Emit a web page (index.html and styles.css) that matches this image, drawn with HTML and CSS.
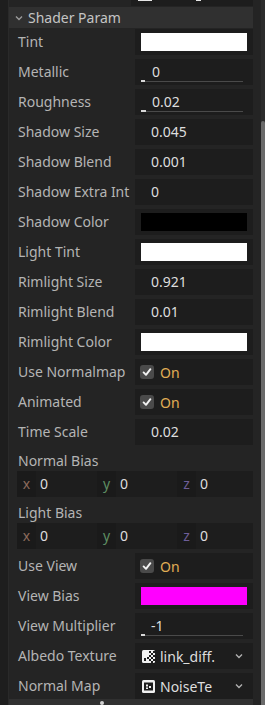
FILE: index.html
```html
<!DOCTYPE html>
<html>
<head>
<meta charset="utf-8">
<link rel="stylesheet" href="styles.css">
</head>
<body>
<div class="frame">
  <div class="strip"></div>
  <div class="panel">
    <div class="prev"><span class="mark m1"></span><span class="mark m2"></span></div>
    <div class="section-head">
      <svg class="chev" width="8" height="6" viewBox="0 0 8 6"><path d="M1 1.5 L4 4.5 L7 1.5" stroke="#9a9a9a" stroke-width="1.4" fill="none"/></svg>
      <span>Shader Param</span>
    </div>
    <div class="rows">
      <div class="row"><div class="label">Tint</div><div class="val"><div class="swatch white"></div></div></div>
      <div class="row"><div class="label">Metallic</div><div class="val slider"><span class="num">0</span><div class="track"><div class="grab"></div></div></div></div>
      <div class="row"><div class="label">Roughness</div><div class="val slider"><span class="num">0.02</span><div class="track"><div class="grab g2"></div></div></div></div>
      <div class="row"><div class="label">Shadow Size</div><div class="val plain"><span class="num">0.045</span></div></div>
      <div class="row"><div class="label">Shadow Blend</div><div class="val plain"><span class="num">0.001</span></div></div>
      <div class="row"><div class="label">Shadow Extra Int</div><div class="val plain"><span class="num">0</span></div></div>
      <div class="row"><div class="label">Shadow Color</div><div class="val"><div class="swatch black"></div></div></div>
      <div class="row"><div class="label">Light Tint</div><div class="val"><div class="swatch white"></div></div></div>
      <div class="row"><div class="label">Rimlight Size</div><div class="val plain"><span class="num">0.921</span></div></div>
      <div class="row"><div class="label">Rimlight Blend</div><div class="val plain"><span class="num">0.01</span></div></div>
      <div class="row"><div class="label">Rimlight Color</div><div class="val"><div class="swatch white"></div></div></div>
      <div class="row"><div class="label">Use Normalmap</div><div class="val check">
        <svg width="14" height="14" viewBox="0 0 14 14"><rect width="14" height="14" rx="3" fill="#4a4a4a"/><path d="M3.6 7.4 L6 9.8 L10.4 4.2" stroke="#f2f2f2" stroke-width="1.9" fill="none" stroke-linecap="round" stroke-linejoin="round"/></svg>
        <span class="on">On</span></div></div>
      <div class="row"><div class="label">Animated</div><div class="val check">
        <svg width="14" height="14" viewBox="0 0 14 14"><rect width="14" height="14" rx="3" fill="#4a4a4a"/><path d="M3.6 7.4 L6 9.8 L10.4 4.2" stroke="#f2f2f2" stroke-width="1.9" fill="none" stroke-linecap="round" stroke-linejoin="round"/></svg>
        <span class="on">On</span></div></div>
      <div class="row"><div class="label">Time Scale</div><div class="val plain"><span class="num">0.02</span></div></div>
      <div class="vlabel">Normal Bias</div>
      <div class="vec">
        <div class="comp c1"><span class="axis ax">x</span><span class="num">0</span></div>
        <div class="comp c2"><span class="axis ay">y</span><span class="num">0</span></div>
        <div class="comp c3"><span class="axis az">z</span><span class="num">0</span></div>
      </div>
      <div class="vlabel">Light Bias</div>
      <div class="vec">
        <div class="comp c1"><span class="axis ax">x</span><span class="num">0</span></div>
        <div class="comp c2"><span class="axis ay">y</span><span class="num">0</span></div>
        <div class="comp c3"><span class="axis az">z</span><span class="num">0</span></div>
      </div>
      <div class="row"><div class="label">Use View</div><div class="val check">
        <svg width="14" height="14" viewBox="0 0 14 14"><rect width="14" height="14" rx="3" fill="#4a4a4a"/><path d="M3.6 7.4 L6 9.8 L10.4 4.2" stroke="#f2f2f2" stroke-width="1.9" fill="none" stroke-linecap="round" stroke-linejoin="round"/></svg>
        <span class="on">On</span></div></div>
      <div class="row"><div class="label">View Bias</div><div class="val"><div class="swatch magenta"></div></div></div>
      <div class="row"><div class="label">View Multiplier</div><div class="val slider"><span class="num neg">-1</span><div class="track"><div class="grab"></div></div></div></div>
      <div class="row"><div class="label">Albedo Texture</div><div class="val res">
        <svg class="ricon" width="13" height="13" viewBox="0 0 13 13">
          <rect x="0" y="0" width="13" height="13" rx="1.5" fill="#f0f0f0"/>
          <rect x="7" y="1" width="2" height="2" fill="#1d1d1d"/><rect x="11" y="1" width="2" height="2" fill="#1d1d1d"/>
          <rect x="9" y="3" width="2" height="2" fill="#1d1d1d"/>
          <rect x="7" y="5" width="2" height="2" fill="#1d1d1d"/><rect x="11" y="5" width="2" height="2" fill="#1d1d1d"/>
          <rect x="5" y="7" width="2" height="2" fill="#1d1d1d"/><rect x="9" y="7" width="2" height="2" fill="#1d1d1d"/>
          <rect x="7" y="9" width="2" height="2" fill="#1d1d1d"/><rect x="11" y="9" width="2" height="2" fill="#1d1d1d"/>
          <rect x="9" y="11" width="2" height="2" fill="#1d1d1d"/>
          <rect x="2" y="8" width="2" height="3" fill="#1d1d1d"/>
        </svg>
        <span class="rname">link_diff.</span>
        <svg class="dd" width="8" height="6" viewBox="0 0 8 6"><path d="M1 1.5 L4 4.5 L7 1.5" stroke="#b0b0b0" stroke-width="1.4" fill="none"/></svg>
      </div></div>
      <div class="row last"><div class="label">Normal Map</div><div class="val res">
        <svg class="ricon" width="13" height="13" viewBox="0 0 13 13">
          <rect x="0" y="0" width="13" height="13" rx="1.5" fill="#f0f0f0"/>
          <rect x="2" y="2.5" width="9" height="8" fill="#1d1d1d"/>
          <rect x="4" y="4.5" width="2" height="2" fill="#f0f0f0"/>
          <rect x="7" y="6" width="2" height="2" fill="#f0f0f0"/>
          <rect x="4" y="7.5" width="2" height="1.5" fill="#f0f0f0"/>
        </svg>
        <span class="rname">NoiseTe</span>
        <svg class="dd" width="8" height="6" viewBox="0 0 8 6"><path d="M1 1.5 L4 4.5 L7 1.5" stroke="#b0b0b0" stroke-width="1.4" fill="none"/></svg>
      </div></div>
    </div>
    <div class="next-head"><span class="dot"></span></div>
  </div>
  <div class="gutter"></div>
  <div class="scroll"><div class="thumb"></div></div>
</div>
</body>
</html>
```
FILE: styles.css
```css
html, body {
  margin: 0;
  padding: 0;
  background: #1e1e1e;
  overflow: hidden;
}
body {
  width: 265px;
  height: 705px;
  font-family: "Noto Sans", "DejaVu Sans", sans-serif;
  font-size: 14px;
}
.frame {
  display: flex;
  width: 265px;
  height: 705px;
  overflow: hidden;
}
.strip {
  width: 8px;
  flex: none;
  background: #1e1e1e;
  border-right: 1px solid #2a2a2a;
}
.panel {
  width: 244px;
  flex: none;
  background: #242424;
  display: block;
  overflow: hidden;
}
.gutter {
  width: 8px;
  flex: none;
  background: #242424;
}
.scroll {
  width: 4px;
  flex: none;
  background: #2b2b2b;
  display: flex;
  flex-direction: column;
  padding-top: 121px;
}
.thumb {
  flex: 1;
  background: #6a6a6a;
  border-radius: 2px 2px 0 0;
}
.prev {
  height: 6px;
  margin-left: 122px;
  width: 122px;
  background: #1d1d1d;
  display: flex;
  align-items: flex-start;
}
.mark {
  display: block;
  height: 1px;
  background: #e6e6e6;
}
.m1 { width: 14px; margin-left: 7px; }
.m2 { width: 5px; margin-left: 44px; }
.section-head {
  margin-top: 1px;
  height: 21px;
  background: #303030;
  display: flex;
  align-items: center;
  color: #c4c4c4;
  line-height: 21px;
}
.chev { margin-left: 6px; margin-right: 5px; }
.rows {
  margin-top: 1px;
  display: flex;
  flex-direction: column;
}
.row {
  display: flex;
  flex: none;
  height: 26px;
  margin-bottom: 4px;
}
.row.last { margin-bottom: 0; }
.label {
  width: 117px;
  padding-left: 9px;
  color: #b4b4b4;
  line-height: 26px;
  white-space: nowrap;
  overflow: hidden;
}
.val {
  width: 118px;
  background: #1d1d1d;
  position: relative;
  box-sizing: border-box;
}
.swatch {
  position: absolute;
  left: 6px; right: 6px; top: 4px; bottom: 4px;
}
.swatch.white { background: #ffffff; }
.swatch.black { background: #000000; }
.swatch.magenta { background: #ff00ff; }
.num {
  color: #dedede;
  line-height: 26px;
}
.plain { padding-left: 16px; }
.slider { padding-left: 17px; }
.slider .num { line-height: 26px; display: block; }
.slider .neg { margin-left: -1px; }
.track {
  position: absolute;
  left: 6px;
  width: 102px;
  top: 22px;
  height: 1px;
  background: #4a4a4a;
}
.grab {
  position: absolute;
  left: 0;
  top: -1px;
  width: 4px;
  height: 2px;
  background: #d8d8d8;
}
.grab.g2 { width: 5px; }
.check {
  display: flex;
  align-items: center;
  padding-left: 5px;
}
.on {
  color: #e0ae55;
  margin-left: 6px;
}
.vlabel {
  flex: none;
  height: 22px;
  line-height: 24px;
  padding-left: 9px;
  color: #b4b4b4;
}
.vec {
  flex: none;
  margin-left: 8px;
  width: 236px;
  height: 26px;
  margin-bottom: 4px;
  display: flex;
  background: #1d1d1d;
}
.comp {
  display: flex;
  align-items: center;
}
.c1, .c2 { width: 80px; }
.c3 { width: 76px; }
.axis {
  width: 19px;
  height: 26px;
  line-height: 25px;
  text-align: center;
  background: #1a1a1a;
  margin-right: 4px;
}
.ax { color: #8c6a5c; }
.ay { color: #5e8e62; }
.az { color: #6e5e98; }
.res {
  display: flex;
  align-items: center;
  padding-left: 7px;
}
.ricon { flex: none; }
.rname {
  color: #dedede;
  margin-left: 5px;
  flex: 1;
  white-space: nowrap;
  overflow: hidden;
}
.dd { margin-right: 10px; margin-left: 4px; flex: none; }
.next-head {
  height: 10px;
  background: #303030;
  position: relative;
}
.dot {
  position: absolute;
  left: 91px;
  top: 2px;
  width: 4px;
  height: 4px;
  border-radius: 2px;
  background: #d0d0d0;
}
```
